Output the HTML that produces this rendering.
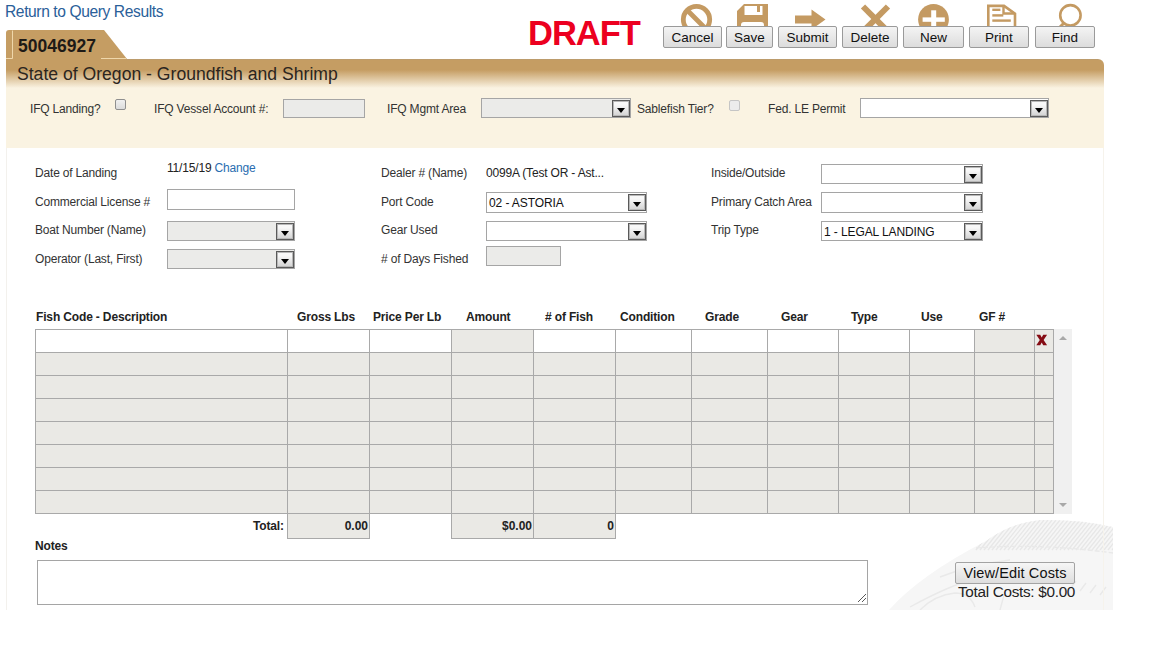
<!DOCTYPE html>
<html><head><meta charset="utf-8">
<style>
*{box-sizing:border-box;margin:0;padding:0}
html,body{width:1152px;height:648px;overflow:hidden;background:#fff;font-family:"Liberation Sans",sans-serif;color:#333}
.a{position:absolute;white-space:nowrap}
.lbl{font-size:12px;letter-spacing:-0.18px;color:#333;line-height:14px}
.btn{position:absolute;top:26px;height:22px;border:1px solid #9a9a9a;border-radius:2px;background:linear-gradient(#f4f4f4,#dcdcdc);font-size:13.5px;color:#111;text-align:center;line-height:21px}
.sel{position:absolute;border:1px solid #a5a5a5;background:#fff;height:20px}
.sel.dis{background:#ebebe9}
.sel .dd{position:absolute;right:0;top:1px;height:17px;width:18px;border:1px solid #5a5a5a;box-shadow:inset 0 0 0 1px #b8b8b8;background:linear-gradient(#f8f8f8 25%,#d2d2d2)}
.sel .dd:after{content:"";position:absolute;left:4px;top:7px;border-left:4px solid transparent;border-right:4px solid transparent;border-top:5px solid #000}
.sel .v{position:absolute;left:2px;top:3px;font-size:12px;color:#111;letter-spacing:-0.1px}
.inp{position:absolute;border:1px solid #a5a5a5;background:#fff}
.inp.dis{background:#ebebe9}
.th{position:absolute;top:310px;font-size:12px;font-weight:bold;color:#222;letter-spacing:-0.15px;line-height:14px}
.tb{position:absolute;left:35px;top:329px;border-collapse:collapse}
.tb td{border:1px solid #a9a9a9;height:23px;background:#eae9e5;padding:0}
.tb tr:first-child td{background:#fff}
.tb tr:first-child td.g{background:#eae9e5}
.ic{position:absolute;top:0}
</style></head><body>

<!-- top link -->
<div class="a" style="left:5px;top:3px;font-size:15.6px;color:#2a6099;letter-spacing:-0.4px">Return to Query Results</div>

<!-- DRAFT -->
<div class="a" style="left:528px;top:15px;font-size:34.5px;font-weight:bold;color:#ec0020;line-height:36px;letter-spacing:-1px">DRAFT</div>

<!-- icons -->
<svg class="ic" width="1152" height="30" style="left:0;top:0">
  <g fill="#c49a62" stroke="none">
    <!-- cancel -->
    <circle cx="696.5" cy="19.6" r="13.2" fill="none" stroke="#c49a62" stroke-width="4.8"/>
    <line x1="687" y1="10" x2="706" y2="29" stroke="#c49a62" stroke-width="4.8"/>
    <!-- save -->
    <path d="M744 4 H768 V30 H737 V11 Z M744.5 6 V15 H762.5 V6 H760 V12 H757 V6 Z M741 30 V25 Q741 22 744 22 H761 Q764 22 764 25 V30 Z" fill-rule="evenodd"/>
    <!-- submit arrow -->
    <path d="M795 15.5 H811.5 V9.5 L825.5 19.5 L811.5 29.5 V23.5 H795 Z"/>
    <!-- delete X -->
    <line x1="863" y1="6.5" x2="889" y2="32.5" stroke="#c49a62" stroke-width="6"/>
    <line x1="888" y1="6.5" x2="862" y2="32.5" stroke="#c49a62" stroke-width="6"/>
    <!-- new -->
    <circle cx="933.5" cy="19.5" r="15.4"/>
    <rect x="922.6" y="17.4" width="22.2" height="4.4" fill="#fff"/>
    <rect x="931.2" y="10.3" width="5" height="20" fill="#fff"/>
    <!-- print -->
    <path d="M988.3 30 V5.9 H1004 L1015 13.7 V30" fill="none" stroke="#c49a62" stroke-width="2.6"/>
    <path d="M1003.5 5.9 V13.5 H1015" fill="none" stroke="#c49a62" stroke-width="2.4"/>
    <rect x="992.3" y="8.6" width="8.1" height="2.4"/>
    <rect x="992.3" y="14.2" width="11" height="2.4"/>
    <rect x="992.3" y="19.4" width="18.5" height="2.4"/>
    <!-- find -->
    <circle cx="1070.4" cy="15.3" r="10.2" fill="none" stroke="#c49a62" stroke-width="2.6"/>
    <line x1="1064" y1="23" x2="1057" y2="30" stroke="#c49a62" stroke-width="3"/>
  </g>
</svg>

<!-- buttons -->
<div class="btn" style="left:663px;width:59px">Cancel</div>
<div class="btn" style="left:726px;width:47px">Save</div>
<div class="btn" style="left:778px;width:59px">Submit</div>
<div class="btn" style="left:842px;width:56px">Delete</div>
<div class="btn" style="left:903px;width:61px">New</div>
<div class="btn" style="left:969px;width:60px">Print</div>
<div class="btn" style="left:1035px;width:60px">Find</div>

<!-- header bar -->
<div class="a" style="left:6px;top:59px;width:1098px;height:30px;border-radius:0 6px 0 0;background:linear-gradient(#b39a74 0px,#c59d63 1px,#c59d63 11px,#faf3e2 29px)"></div>
<!-- tab -->
<svg class="a" style="left:0;top:28px" width="140" height="32">
  <path d="M6 32 V5 Q6 2 9 2 H104 L127 31 V32 Z" fill="#c59d63"/>
  <path d="M12.5 2.5 V30.5 H6 M101 30.5 H126" fill="none" stroke="#efd7ab" stroke-width="1"/>
</svg>
<div class="a" style="left:18px;top:36px;font-size:17.5px;font-weight:bold;color:#1e1a16;line-height:20px">50046927</div>

<div class="a" style="left:17px;top:64px;font-size:17.6px;color:#2b2520;line-height:20px">State of Oregon - Groundfish and Shrimp</div>

<!-- IFQ panel -->
<div class="a" style="left:6px;top:89px;width:1098px;height:59px;background:#faf3e2"></div>
<div class="a lbl" style="left:30px;top:102px">IFQ Landing?</div>
<div class="a" style="left:115px;top:99px;width:11px;height:11px;border:1px solid #8f8f8f;border-radius:2px;background:linear-gradient(#f0f0f0,#dcdcdc)"></div>
<div class="a lbl" style="left:154px;top:102px">IFQ Vessel Account #:</div>
<div class="inp dis" style="left:283px;top:99px;width:82px;height:19px"></div>
<div class="a lbl" style="left:387px;top:102px">IFQ Mgmt Area</div>
<div class="sel dis" style="left:481px;top:98px;width:150px"><div class="dd"></div></div>
<div class="a lbl" style="left:637px;top:102px">Sablefish Tier?</div>
<div class="a" style="left:729px;top:100px;width:11px;height:11px;border:1px solid #c5c5c5;border-radius:2px;background:#ececec"></div>
<div class="a lbl" style="left:768px;top:102px">Fed. LE Permit</div>
<div class="sel" style="left:860px;top:98px;width:189px"><div class="dd"></div></div>

<!-- main panel border -->
<div class="a" style="left:6px;top:148px;width:1098px;height:462px;border-left:1px solid #f3f1ed;border-right:none"></div>

<!-- form rows -->
<div class="a lbl" style="left:35px;top:166px">Date of Landing</div>
<div class="a lbl" style="left:167px;top:161px;color:#222">11/15/19 <span style="color:#2a6db0">Change</span></div>
<div class="a lbl" style="left:35px;top:195px">Commercial License #</div>
<div class="inp" style="left:167px;top:189px;width:128px;height:21px"></div>
<div class="a lbl" style="left:35px;top:223px">Boat Number (Name)</div>
<div class="sel dis" style="left:167px;top:221px;width:128px"><div class="dd"></div></div>
<div class="a lbl" style="left:35px;top:252px">Operator (Last, First)</div>
<div class="sel dis" style="left:167px;top:249px;width:128px"><div class="dd"></div></div>

<div class="a lbl" style="left:381px;top:166px">Dealer # (Name)</div>
<div class="a lbl" style="left:486px;top:166px;color:#222">0099A (Test OR - Ast...</div>
<div class="a lbl" style="left:381px;top:195px">Port Code</div>
<div class="sel" style="left:486px;top:192px;width:161px;height:21px"><div class="dd"></div><div class="v">02 - ASTORIA</div></div>
<div class="a lbl" style="left:381px;top:223px">Gear Used</div>
<div class="sel" style="left:486px;top:221px;width:161px"><div class="dd"></div></div>
<div class="a lbl" style="left:381px;top:252px"># of Days Fished</div>
<div class="inp dis" style="left:486px;top:246px;width:75px;height:20px"></div>

<div class="a lbl" style="left:711px;top:166px">Inside/Outside</div>
<div class="sel" style="left:821px;top:164px;width:162px"><div class="dd"></div></div>
<div class="a lbl" style="left:711px;top:195px">Primary Catch Area</div>
<div class="sel" style="left:821px;top:192px;width:162px;height:21px"><div class="dd"></div></div>
<div class="a lbl" style="left:711px;top:223px">Trip Type</div>
<div class="sel" style="left:821px;top:221px;width:162px"><div class="dd"></div><div class="v">1 - LEGAL LANDING</div></div>

<!-- table headers -->
<div class="th" style="left:36px">Fish Code - Description</div>
<div class="th" style="left:297px">Gross Lbs</div>
<div class="th" style="left:373px">Price Per Lb</div>
<div class="th" style="left:466px">Amount</div>
<div class="th" style="left:545px"># of Fish</div>
<div class="th" style="left:620px">Condition</div>
<div class="th" style="left:705px">Grade</div>
<div class="th" style="left:781px">Gear</div>
<div class="th" style="left:851px">Type</div>
<div class="th" style="left:921px">Use</div>
<div class="th" style="left:979px">GF #</div>

<!-- table -->
<table class="tb">
<colgroup><col style="width:252px"><col style="width:82px"><col style="width:82px"><col style="width:82px"><col style="width:82px"><col style="width:76px"><col style="width:76px"><col style="width:71px"><col style="width:71px"><col style="width:65px"><col style="width:60px"><col style="width:19px"></colgroup>
<tr><td></td><td></td><td></td><td class="g"></td><td></td><td></td><td></td><td></td><td></td><td></td><td class="g"></td><td class="g"></td></tr>
<tr><td></td><td></td><td></td><td></td><td></td><td></td><td></td><td></td><td></td><td></td><td></td><td></td></tr>
<tr><td></td><td></td><td></td><td></td><td></td><td></td><td></td><td></td><td></td><td></td><td></td><td></td></tr>
<tr><td></td><td></td><td></td><td></td><td></td><td></td><td></td><td></td><td></td><td></td><td></td><td></td></tr>
<tr><td></td><td></td><td></td><td></td><td></td><td></td><td></td><td></td><td></td><td></td><td></td><td></td></tr>
<tr><td></td><td></td><td></td><td></td><td></td><td></td><td></td><td></td><td></td><td></td><td></td><td></td></tr>
<tr><td></td><td></td><td></td><td></td><td></td><td></td><td></td><td></td><td></td><td></td><td></td><td></td></tr>
<tr><td></td><td></td><td></td><td></td><td></td><td></td><td></td><td></td><td></td><td></td><td></td><td></td></tr>
</table>
<!-- delete x -->
<svg class="a" style="left:1036px;top:334px" width="12" height="12"><path d="M0.3 0.8 H4.2 L5.7 3.6 L7.2 0.8 H11.1 L7.6 6 L11.1 11.2 H7.2 L5.7 8.4 L4.2 11.2 H0.3 L3.8 6 Z" fill="#850c14"/></svg>
<!-- scrollbar -->
<div class="a" style="left:1054px;top:329px;width:18px;height:185px;background:#f0f0f0"></div>
<div class="a" style="left:1059px;top:336px;border-left:4px solid transparent;border-right:4px solid transparent;border-bottom:4px solid #a8a8a8"></div>
<div class="a" style="left:1059px;top:503px;border-left:4px solid transparent;border-right:4px solid transparent;border-top:4px solid #a8a8a8"></div>

<!-- totals -->
<div class="a" style="left:253px;top:519px;font-size:12px;font-weight:bold;color:#222;letter-spacing:-0.15px">Total:</div>
<div class="a" style="left:287px;top:513px;width:83px;height:26px;border:1px solid #a9a9a9;background:#eae9e5;font-size:12px;font-weight:bold;color:#222;text-align:right;padding:5px 1px 0 0;line-height:14px">0.00</div>
<div class="a" style="left:451px;top:513px;width:83px;height:26px;border:1px solid #a9a9a9;background:#eae9e5;font-size:12px;font-weight:bold;color:#222;text-align:right;padding:5px 1px 0 0;line-height:14px">$0.00</div>
<div class="a" style="left:533px;top:513px;width:83px;height:26px;border:1px solid #a9a9a9;background:#eae9e5;font-size:12px;font-weight:bold;color:#222;text-align:right;padding:5px 1px 0 0;line-height:14px">0</div>

<!-- notes -->
<div class="a" style="left:35px;top:539px;font-size:12px;font-weight:bold;color:#222;letter-spacing:-0.15px">Notes</div>
<div class="inp" style="left:37px;top:560px;width:831px;height:45px"></div>

<!-- watermark -->
<svg class="a" style="left:880px;top:515px" width="233" height="95">
  <defs><clipPath id="cw"><path d="M9 95 Q40 60 106 26 Q130 8 160 5 Q200 4 233 12 V95 Z"/></clipPath></defs>
  <g clip-path="url(#cw)">
  <rect width="233" height="95" fill="#f6f6f6"/>
  <path d="M96 35 L120 5 M100 35 L124 5 M104 35 L128 5 M108 35 L132 5 M112 35 L136 5 M116 35 L140 5 M120 35 L144 5 M124 35 L148 5 M128 35 L152 5 M132 35 L156 5 M136 35 L160 5 M140 35 L164 5 M144 35 L168 5 M148 35 L172 5 M152 35 L176 5 M156 35 L180 5 M160 35 L184 5 M164 35 L188 5 M168 35 L192 5 M172 35 L196 5 M176 35 L200 5 M180 35 L204 5 M184 35 L208 5 M188 35 L212 5 M192 35 L216 5 M196 35 L220 5 M200 35 L224 5 M204 35 L228 5 M208 35 L232 5 M212 35 L236 5 M216 35 L240 5 M220 35 L244 5 M224 35 L248 5 M228 35 L252 5 M232 35 L256 5" stroke="#e7e7e7" stroke-width="1.3" fill="none"/>
  <g stroke="#e9e9e9" stroke-width="1.4" fill="none">
    <path d="M96 33 Q160 28 233 38" stroke-dasharray="5 2"/>
    <path d="M60 62 Q90 50 130 45"/>
    <path d="M30 92 Q70 70 100 62"/>
    <path d="M190 74 L196 66 M200 76 L206 68 M210 78 L216 70 M220 80 L226 72"/>
    <path d="M40 95 Q55 80 75 78 Q90 78 95 92"/>
    <path d="M120 95 L124 80"/>
  </g>
  </g>
</svg>
<div class="a" style="left:1103px;top:148px;width:1px;height:462px;background:#f6f3ec"></div>
<svg class="a" style="left:857px;top:593px" width="10" height="10"><g fill="#5a5a5a"><rect x="1" y="8" width="1" height="1"/><rect x="2" y="7" width="1" height="1"/><rect x="3" y="6" width="1" height="1"/><rect x="4" y="5" width="1" height="1"/><rect x="5" y="4" width="1" height="1"/><rect x="6" y="3" width="1" height="1"/><rect x="7" y="2" width="1" height="1"/><rect x="8" y="1" width="1" height="1"/><rect x="5" y="8" width="1" height="1"/><rect x="6" y="7" width="1" height="1"/><rect x="7" y="6" width="1" height="1"/><rect x="8" y="5" width="1" height="1"/></g></svg>
<!-- costs -->
<div class="a" style="left:955px;top:562px;width:120px;height:22px;border:1px solid #a3a3a3;border-radius:2px;background:linear-gradient(#f6f6f6,#dedede);font-size:14.5px;color:#111;text-align:center;line-height:20px;letter-spacing:0.12px">View/Edit Costs</div>
<div class="a" style="left:958px;top:583px;font-size:15.3px;color:#222;line-height:18px;letter-spacing:-0.3px">Total Costs: $0.00</div>

</body></html>
